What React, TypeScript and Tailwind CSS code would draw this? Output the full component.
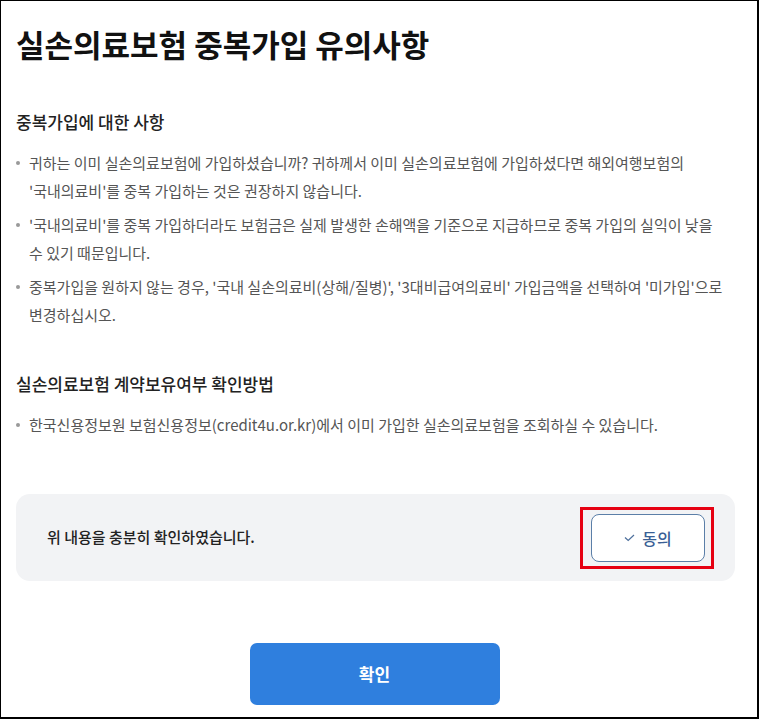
const bullets1 = [
  "귀하는 이미 실손의료보험에 가입하셨습니까? 귀하께서 이미 실손의료보험에 가입하셨다면 해외여행보험의 '국내의료비'를 중복 가입하는 것은 권장하지 않습니다.",
  "'국내의료비'를 중복 가입하더라도 보험금은 실제 발생한 손해액을 기준으로 지급하므로 중복 가입의 실익이 낮을 수 있기 때문입니다.",
  "중복가입을 원하지 않는 경우, '국내 실손의료비(상해/질병)', '3대비급여의료비' 가입금액을 선택하여 '미가입'으로 변경하십시오.",
]

function Bullet({ text }: { text: string }) {
  return (
    <li className="relative pl-[13px] text-[15px] leading-[28px] text-[#555] break-keep">
      <span className="absolute left-0 top-[12px] w-[4px] h-[4px] rounded-full bg-[#999]" />
      {text}
    </li>
  )
}

export default function App() {
  return (
    <div
      className="h-[719px] w-[759px] bg-white border-l border-t border-r-2 border-b-2 border-black flex flex-col"
      style={{ fontFamily: "'Noto Sans CJK KR', 'Noto Sans', sans-serif" }}
    >
      <div className="px-[15px] pt-[21px]">
        <h1 className="text-[31px] font-bold leading-[44px] text-[#111]">실손의료보험 중복가입 유의사항</h1>

        <h2 className="mt-[43px] text-[17px] font-medium leading-[26px] text-[#222]">중복가입에 대한 사항</h2>
        <ul className="mt-[14px] flex flex-col gap-[6px] pr-[14px]">
          {bullets1.map((t) => (
            <Bullet key={t} text={t} />
          ))}
        </ul>

        <h2 className="mt-[42px] text-[17px] font-medium leading-[26px] text-[#222]">실손의료보험 계약보유여부 확인방법</h2>
        <ul className="mt-[14px] flex flex-col">
          <Bullet text="한국신용정보원 보험신용정보(credit4u.or.kr)에서 이미 가입한 실손의료보험을 조회하실 수 있습니다." />
        </ul>

        <div className="mt-[55px] mr-[7px] h-[87px] rounded-[14px] bg-[#f2f3f5] flex items-center justify-between pl-[31px] pr-[21px]">
          <span className="text-[15px] font-medium text-[#222]">위 내용을 충분히 확인하였습니다.</span>
          <div className="border-[3px] border-[#e60012] pt-[4px] pb-[4px] pl-[8px] pr-[6px]">
            <button className="w-[114px] h-[48px] rounded-[8px] border border-[#5b7fa8] bg-white flex items-center justify-center gap-[7px] text-[16px] font-medium text-[#3a5f95]">
              <svg width="11" height="8" viewBox="0 0 11 8" fill="none">
                <path d="M1 3.5L4.2 6.5L10 1" stroke="#4d6f9c" strokeWidth="1.2" />
              </svg>
              동의
            </button>
          </div>
        </div>
      </div>

      <div className="mt-[62px] flex justify-center pr-[9px]">
        <button className="w-[250px] h-[62px] rounded-[7px] bg-[#2f7fde] text-white text-[17px] font-bold">확인</button>
      </div>
    </div>
  )
}
